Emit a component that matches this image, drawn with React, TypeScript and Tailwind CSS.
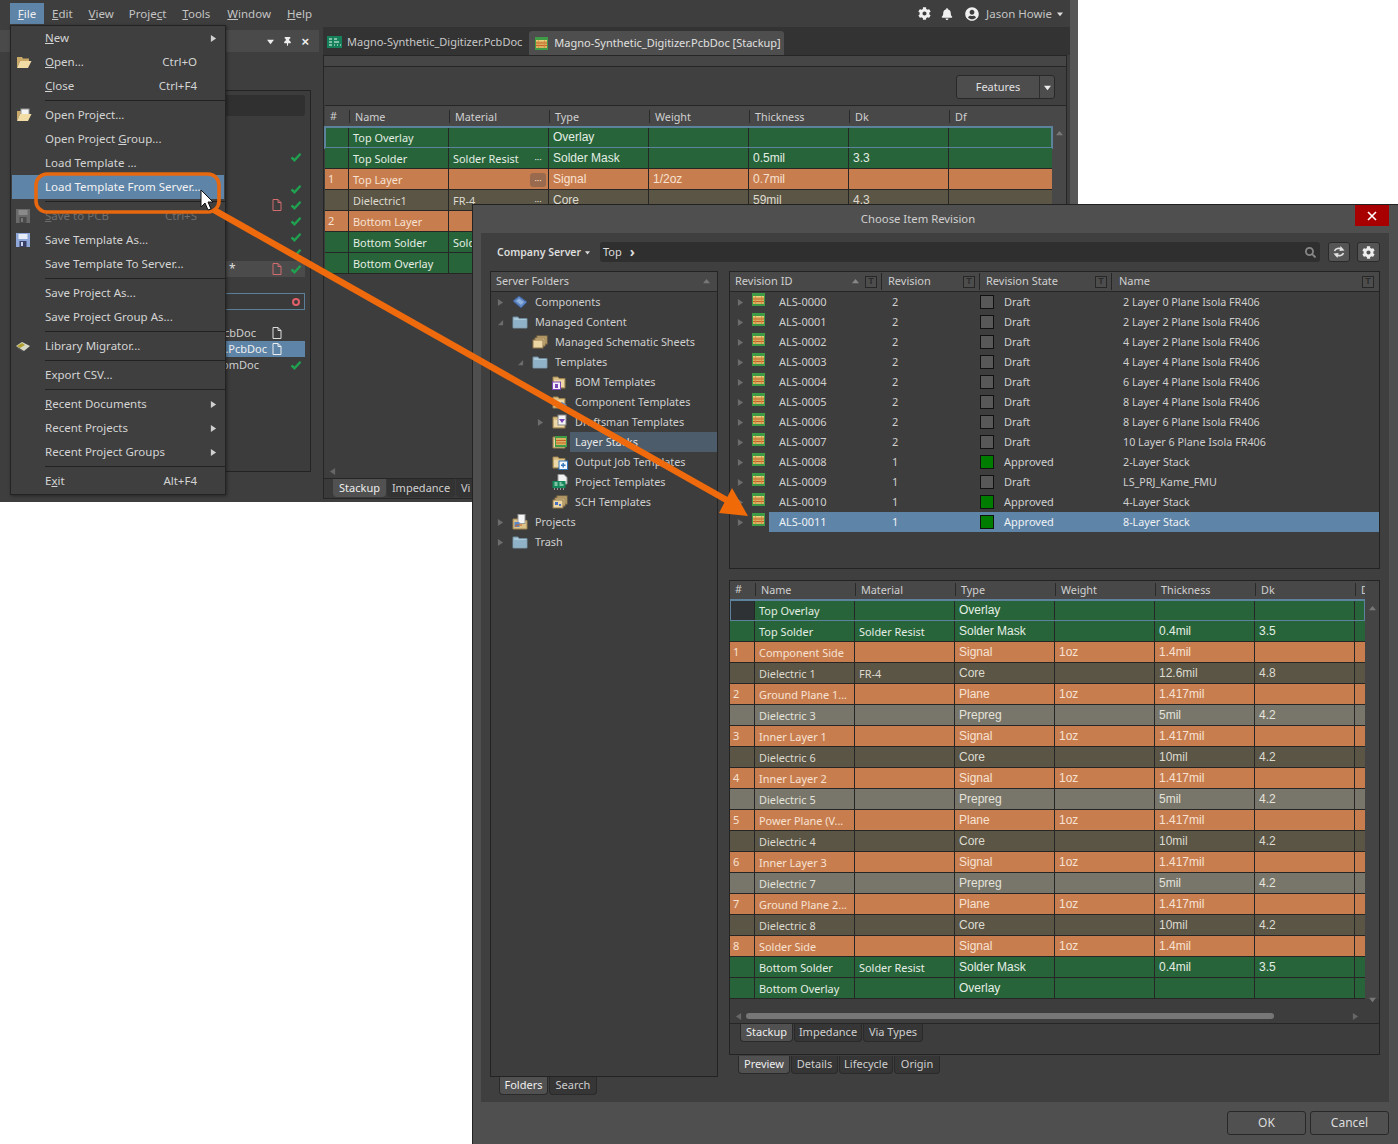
import { FaBell, FaCog, FaSearch, FaThumbtack, FaUserCircle } from "react-icons/fa";

const SANS = "font-['Noto_Sans',sans-serif]";
const ARIAL = "font-['Liberation_Sans',sans-serif]";

// ---------- small drawings ----------
const Tri = ({ dir = "right", color = "#6c6c6c", size = 7 }: { dir?: string; color?: string; size?: number }) => {
    const pts: Record<string, string> = {
        right: "1,0 7,4 1,8",
        down: "0,2 8,2 4,7",
        up: "0,6 8,6 4,1",
        left: "7,0 1,4 7,8",
        corner: "7,1 7,7 1,7",
    };
    return (
        <svg width={size} height={size} viewBox="0 0 8 8" className="shrink-0">
            <polygon points={pts[dir]} fill={color} />
        </svg>
    );
};

const LayerStackIcon = ({ size = 13 }: { size?: number }) => (
    <svg width={size} height={size} viewBox="0 0 13 13" className="shrink-0">
        <rect x="0" y="0" width="13" height="13" fill="#3f9a45" />
        <rect x="1" y="3" width="11" height="8" fill="#d9b060" />
        <rect x="1" y="3" width="11" height="1" fill="#e8d080" />
        <rect x="1" y="5.5" width="11" height="1" fill="#c8612a" />
        <rect x="1" y="8" width="11" height="1" fill="#c8612a" />
        <rect x="3" y="3" width="1" height="8" fill="#c98b3c" opacity="0.6" />
        <rect x="9" y="3" width="1" height="8" fill="#c98b3c" opacity="0.6" />
    </svg>
);

const BlueFolder = () => (
    <svg width="16" height="14" viewBox="0 0 16 14" className="shrink-0">
        <path d="M1 2h5l1 1.500h8V13H1z" fill="#a9c8da" stroke="#6f8c9f" />
        <rect x="2" y="5" width="12" height="7" fill="#8fb2c9" />
    </svg>
);

const TanFolder = ({ children }: { children?: React.ReactNode }) => (
    <svg width="16" height="16" viewBox="0 0 16 16" className="shrink-0">
        <path d="M1 3h5l1 1.500h6V14H1z" fill="#dcc187" stroke="#9c8350" />
        <rect x="2" y="6" width="10" height="7" fill="#ecd8a6" />
        {children}
    </svg>
);

const TreeIcon = ({ kind }: { kind: string }) => {
    if (kind === "blue") return <BlueFolder />;
    if (kind === "chip")
        return (
            <svg width="16" height="14" viewBox="0 0 16 14" className="shrink-0">
                <polygon points="1,6 7,1 15,7 9,13" fill="#5d86c2" stroke="#3b5c90" />
                <polygon points="4,6 7,3.5 12,7 9,10" fill="#8fb1de" />
            </svg>
        );
    if (kind === "stacks")
        return (
            <svg width="16" height="14" viewBox="0 0 16 14" className="shrink-0">
                <rect x="5" y="1" width="10" height="8" fill="#cdb27c" stroke="#8f774a" />
                <rect x="3" y="3" width="10" height="8" fill="#dcc38d" stroke="#8f774a" />
                <rect x="1" y="5" width="10" height="8" fill="#ecd6a3" stroke="#8f774a" />
            </svg>
        );
    if (kind === "bom")
        return (
            <TanFolder>
                <rect x="0.5" y="8" width="8" height="7.5" fill="#f2eefa" stroke="#7a45b5" />
                <rect x="3" y="10" width="3" height="4" fill="#7a45b5" />
            </TanFolder>
        );
    if (kind === "comp")
        return (
            <TanFolder>
                <polygon points="5,11 10,8 15,11 10,15" fill="#5d86c2" />
            </TanFolder>
        );
    if (kind === "draft")
        return (
            <TanFolder>
                <rect x="6" y="1" width="8" height="10" fill="#f4f4f4" stroke="#888" />
                <polygon points="7,5 13,5 10,9" fill="#7a45b5" />
            </TanFolder>
        );
    if (kind === "layer")
        return (
            <TanFolder>
                <rect x="3" y="2" width="12" height="11" fill="#3f9a45" />
                <rect x="4" y="4" width="10" height="7" fill="#d9b060" />
                <rect x="4" y="6" width="10" height="1" fill="#c8612a" />
                <rect x="4" y="8.5" width="10" height="1" fill="#c8612a" />
            </TanFolder>
        );
    if (kind === "output")
        return (
            <TanFolder>
                <rect x="7" y="7" width="8.5" height="8.5" fill="#f4f8fc" stroke="#2f74b8" />
                <path d="M9 11.2h4.500M11.200 9v4.500" stroke="#2f74b8" strokeWidth="1.400" />
            </TanFolder>
        );
    if (kind === "project")
        return (
            <svg width="16" height="16" viewBox="0 0 16 16" className="shrink-0">
                <path d="M6 0.500h6l3 3V10H6z" fill="#f2f2f2" stroke="#999" />
                <rect x="0.500" y="7" width="13" height="7" fill="#16895b" />
                <path d="M2.500 9h3M2.500 11h3M7.500 9h2M7.500 11h4M2 15h1M5 15h1M8 15h1M11 15h1" stroke="#eafff4" />
            </svg>
        );
    if (kind === "sch")
        return (
            <svg width="16" height="14" viewBox="0 0 16 14" className="shrink-0">
                <rect x="5" y="1" width="10" height="8" fill="#cdb27c" stroke="#8f774a" />
                <rect x="3" y="3" width="10" height="8" fill="#dcc38d" stroke="#8f774a" />
                <rect x="1" y="5" width="10" height="8" fill="#ecd6a3" stroke="#8f774a" />
                <rect x="3" y="7" width="3" height="3" fill="#4a6fc0" />
                <rect x="7" y="9" width="2" height="2" fill="#4a6fc0" />
            </svg>
        );
    return (
        <svg width="16" height="16" viewBox="0 0 16 16" className="shrink-0">
            <path d="M1 5h5l1 1.500h8V15H1z" fill="#dcc187" stroke="#9c8350" />
            <rect x="6" y="0.500" width="7" height="9" fill="#f4f4f4" stroke="#999" />
            <rect x="2.500" y="8" width="5" height="5" fill="#5d86c2" />
            <path d="M4 13v-2h6" stroke="#c8612a" fill="none" />
        </svg>
    );
};

const FilterT = () => (
    <span className="flex h-[12px] w-[12px] shrink-0 items-center justify-center border border-[#272727] bg-[#4d4d4d]">
        <span className={`${ARIAL} text-[9px] font-bold leading-none text-[#2b2b2b]`}>T</span>
    </span>
);

const Check = () => (
    <svg width="12" height="10" viewBox="0 0 12 10" className="shrink-0">
        <path d="M1.500 5.500 4.500 8.200 10.500 1.800" fill="none" stroke="#1fa14f" strokeWidth="2.400" />
    </svg>
);

const FileIcon = ({ color = "#d8d8d8" }: { color?: string }) => (
    <svg width="10" height="12" viewBox="0 0 10 12" className="shrink-0">
        <path d="M1 .500h5l3 3V11.500H1z" fill="none" stroke={color} />
        <path d="M6 .500v3h3" fill="none" stroke={color} />
    </svg>
);

const SwapIcon = () => (
    <svg width="14" height="14" viewBox="0 0 14 14">
        <path d="M2.500 6C3.500 3.500 7 2.500 10 4.200" fill="none" stroke="#e0e0e0" strokeWidth="1.600" />
        <polygon points="8.500,1 12.500,5.500 7.500,6" fill="#e0e0e0" />
        <path d="M11.500 8C10.500 10.500 7 11.500 4 9.800" fill="none" stroke="#e0e0e0" strokeWidth="1.600" />
        <polygon points="5.500,13 1.500,8.500 6.500,8" fill="#e0e0e0" />
    </svg>
);

// ---------- stackup tables ----------
type Layer = { n: string; name: string; mat: string; type: string; w: string; t: string; dk: string; k: string };

const rowBg: Record<string, string> = {
    g: "bg-[#27643a] text-[#e4eee4]",
    o: "bg-[#c87d4f] text-[#f7e2d2]",
    c: "bg-[#5a5545] text-[#dedbd0]",
    p: "bg-[#78766a] text-[#e4e3dc]",
};

// the last three rows run under the dialog, only what shows is kept
const backLayers: Layer[] = [
    { n: "", name: "Top Overlay", mat: "", type: "Overlay", w: "", t: "", dk: "", k: "g" },
    { n: "", name: "Top Solder", mat: "Solder Resist", type: "Solder Mask", w: "", t: "0.5mil", dk: "3.3", k: "g" },
    { n: "1", name: "Top Layer", mat: "", type: "Signal", w: "1/2oz", t: "0.7mil", dk: "", k: "o" },
    { n: "", name: "Dielectric1", mat: "FR-4", type: "Core", w: "", t: "59mil", dk: "4.3", k: "c" },
    { n: "2", name: "Bottom Layer", mat: "", type: "", w: "", t: "", dk: "", k: "o" },
    { n: "", name: "Bottom Solder", mat: "Solder", type: "", w: "", t: "", dk: "", k: "g" },
    { n: "", name: "Bottom Overlay", mat: "", type: "", w: "", t: "", dk: "", k: "g" },
];

const frontLayers: Layer[] = [
    { n: "", name: "Top Overlay", mat: "", type: "Overlay", w: "", t: "", dk: "", k: "g" },
    { n: "", name: "Top Solder", mat: "Solder Resist", type: "Solder Mask", w: "", t: "0.4mil", dk: "3.5", k: "g" },
    { n: "1", name: "Component Side", mat: "", type: "Signal", w: "1oz", t: "1.4mil", dk: "", k: "o" },
    { n: "", name: "Dielectric 1", mat: "FR-4", type: "Core", w: "", t: "12.6mil", dk: "4.8", k: "c" },
    { n: "2", name: "Ground Plane 1...", mat: "", type: "Plane", w: "1oz", t: "1.417mil", dk: "", k: "o" },
    { n: "", name: "Dielectric 3", mat: "", type: "Prepreg", w: "", t: "5mil", dk: "4.2", k: "p" },
    { n: "3", name: "Inner Layer 1", mat: "", type: "Signal", w: "1oz", t: "1.417mil", dk: "", k: "o" },
    { n: "", name: "Dielectric 6", mat: "", type: "Core", w: "", t: "10mil", dk: "4.2", k: "c" },
    { n: "4", name: "Inner Layer 2", mat: "", type: "Signal", w: "1oz", t: "1.417mil", dk: "", k: "o" },
    { n: "", name: "Dielectric 5", mat: "", type: "Prepreg", w: "", t: "5mil", dk: "4.2", k: "p" },
    { n: "5", name: "Power Plane (V...", mat: "", type: "Plane", w: "1oz", t: "1.417mil", dk: "", k: "o" },
    { n: "", name: "Dielectric 4", mat: "", type: "Core", w: "", t: "10mil", dk: "4.2", k: "c" },
    { n: "6", name: "Inner Layer 3", mat: "", type: "Signal", w: "1oz", t: "1.417mil", dk: "", k: "o" },
    { n: "", name: "Dielectric 7", mat: "", type: "Prepreg", w: "", t: "5mil", dk: "4.2", k: "p" },
    { n: "7", name: "Ground Plane 2...", mat: "", type: "Plane", w: "1oz", t: "1.417mil", dk: "", k: "o" },
    { n: "", name: "Dielectric 8", mat: "", type: "Core", w: "", t: "10mil", dk: "4.2", k: "c" },
    { n: "8", name: "Solder Side", mat: "", type: "Signal", w: "1oz", t: "1.4mil", dk: "", k: "o" },
    { n: "", name: "Bottom Solder", mat: "Solder Resist", type: "Solder Mask", w: "", t: "0.4mil", dk: "3.5", k: "g" },
    { n: "", name: "Bottom Overlay", mat: "", type: "Overlay", w: "", t: "", dk: "", k: "g" },
];

const TableHeader = ({ hashW, lastLabel, size }: { hashW: string; lastLabel: string; size: string }) => (
    <div className={`flex ${size} items-center bg-[#484848] text-[10.800px] text-[#d0d0d0]`}>
        <span className={`${hashW} shrink-0 pl-[5px]`}>#</span>
        {["Name", "Material", "Type", "Weight", "Thickness", "Dk"].map((h) => (
            <span key={h} className="w-[100px] shrink-0 border-l border-[#2a2a2a] pl-[5px] leading-[13px]">{h}</span>
        ))}
        <span className="min-w-0 flex-1 overflow-hidden whitespace-nowrap border-l border-[#2a2a2a] pl-[5px] leading-[13px]">{lastLabel}</span>
    </div>
);

const Cell = ({ children, arial }: { children?: React.ReactNode; arial?: boolean }) => (
    <span className={`flex h-full w-[100px] shrink-0 items-center whitespace-nowrap border-r border-[#262626] pl-[4px] ${arial ? `${ARIAL} text-[12px]` : "pt-[2px] text-[10.900px]"}`}>
        {children}
    </span>
);

const LayerRow = ({ l, hashW, focus, darkHash, dots }: { l: Layer; hashW: string; focus?: boolean; darkHash?: boolean; dots?: boolean }) => (
    <div className={`relative flex h-[21px] items-center border-b border-[#262626] ${rowBg[l.k]} ${focus ? "outline-2 -outline-offset-1 outline-[#5c829c]" : ""}`}>
        <span className={`flex h-full ${hashW} shrink-0 items-center border-r border-[#262626] pl-[3px] text-[11px] ${darkHash ? "bg-[#2e3235]" : ""}`}>{l.n}</span>
        <Cell>{l.name}</Cell>
        <Cell>
            {l.mat}
            {dots && l.k !== "g" || (dots && l.mat) ? (
                <span className={`absolute left-[205px] flex h-[14px] w-[16px] items-center justify-center rounded-[3px] text-[9px] leading-none ${l.k === "o" ? "bg-[#9a6a4e]" : ""}`}>···</span>
            ) : null}
        </Cell>
        <Cell arial>{l.type}</Cell>
        <Cell arial>{l.w}</Cell>
        <Cell arial>{l.t}</Cell>
        <Cell arial>{l.dk}</Cell>
        <span className="h-full flex-1" />
    </div>
);

// ---------- file menu ----------
const menu: (null | { t: React.ReactNode; s?: string; sub?: boolean; ico?: string; hi?: boolean; off?: boolean })[] = [
    { t: <><u>N</u>ew</>, sub: true },
    { t: <><u>O</u>pen...</>, s: "Ctrl+O", ico: "open" },
    { t: <><u>C</u>lose</>, s: "Ctrl+F4" },
    null,
    { t: "Open Project...", ico: "proj" },
    { t: <>Open Project <u>G</u>roup...</> },
    { t: "Load Template ..." },
    { t: "Load Template From Server...", hi: true },
    null,
    { t: <><u>S</u>ave to PCB</>, s: "Ctrl+S", ico: "saveoff", off: true },
    { t: "Save Template As...", ico: "save" },
    { t: "Save Template To Server..." },
    null,
    { t: "Save Project As..." },
    { t: "Save Project Group As..." },
    null,
    { t: "Library Migrator...", ico: "lib" },
    null,
    { t: "Export CSV..." },
    null,
    { t: <><u>R</u>ecent Documents</>, sub: true },
    { t: "Recent Projects", sub: true },
    { t: "Recent Project Groups", sub: true },
    null,
    { t: <>E<u>x</u>it</>, s: "Alt+F4" },
];

const MenuIcon = ({ kind }: { kind?: string }) => {
    if (kind === "open")
        return (
            <svg width="16" height="14" viewBox="0 0 16 14">
                <path d="M1 2h5l1 1.500h6V6H4L1 13z" fill="#c9a868" />
                <path d="M4 6h11.500L12 13H1z" fill="#f2dca6" />
            </svg>
        );
    if (kind === "proj")
        return (
            <svg width="16" height="14" viewBox="0 0 16 14">
                <path d="M1 3h4v3H4L1 13z" fill="#c9a868" />
                <rect x="5" y="1" width="8" height="7" fill="#f2f2f2" stroke="#999" />
                <path d="M4 6h11.500L12 13H1z" fill="#f2dca6" />
            </svg>
        );
    if (kind === "save" || kind === "saveoff")
        return (
            <svg width="14" height="14" viewBox="0 0 14 14">
                <rect width="14" height="14" fill={kind === "save" ? "#8ea6d8" : "#6a6a6a"} />
                <rect x="2.500" y="1" width="9" height="5" fill={kind === "save" ? "#e8eef8" : "#8a8a8a"} />
                <rect x="3.500" y="8" width="7" height="6" fill={kind === "save" ? "#3a3f66" : "#4a4a4a"} />
                <rect x="5" y="9" width="2" height="4" fill={kind === "save" ? "#c8d4ee" : "#777"} />
            </svg>
        );
    if (kind === "lib")
        return (
            <svg width="14" height="11" viewBox="0 0 14 11">
                <polygon points="0,5 6,1 14,5 8,10" fill="#d8d8c8" />
                <polygon points="1,5 6,2 9,4 4,7" fill="#b0a030" />
                <path d="M1 6.500 7 10.500" stroke="#555" />
            </svg>
        );
    return null;
};

const FileMenu = () => (
    <div className="absolute left-[10px] top-[25px] z-20 w-[216px] border border-[#232323] bg-[#3f3f3f] pb-[1px] text-[11.500px] text-[#d4d4d4] shadow-[1px_1px_3px_#0006]">
        {menu.map((m, i) =>
            m === null ? (
                <div key={i} className="flex h-[5px] items-center pl-[34px]">
                    <div className="h-[1px] w-full bg-[#222]" />
                </div>
            ) : (
                <div key={i} className={`flex h-[24px] items-center ${m.hi ? "mx-[1px] bg-[#5e84a8] text-[#f2f2f2]" : ""} ${m.off ? "text-[#6e6e6e]" : ""}`}>
                    <span className={`flex ${m.hi ? "w-[33px]" : "w-[34px]"} shrink-0 justify-start pl-[5px]`}>
                        <MenuIcon kind={m.ico} />
                    </span>
                    <span className="flex-1 whitespace-nowrap">{m.t}</span>
                    {m.s && <span className="pr-[28px]">{m.s}</span>}
                    {m.sub && <span className="pr-[8px]"><Tri size={7} color="#d0d0d0" /></span>}
                </div>
            ),
        )}
    </div>
);

// ---------- background window ----------
const TopBar = () => (
    <div className="flex h-[27px] items-center bg-[#3e3e3e] pl-[10px] pr-[7px] text-[11.500px] text-[#c4c4c4]">
        <span className="flex h-[21px] w-[34px] items-center justify-center bg-[#5e84a8] text-[#eee]"><span><u>F</u>ile</span></span>
        <span className="ml-[8px]"><u>E</u>dit</span>
        <span className="ml-[16px]"><u>V</u>iew</span>
        <span className="ml-[15px]">Proje<u>c</u>t</span>
        <span className="ml-[16px]"><u>T</u>ools</span>
        <span className="ml-[17px]"><u>W</u>indow</span>
        <span className="ml-[16px]"><u>H</u>elp</span>
        <span className="flex-1" />
        <FaCog className="text-[13px] text-[#f0f0f0]" />
        <FaBell className="ml-[10px] text-[12px] text-[#f0f0f0]" />
        <FaUserCircle className="ml-[12px] text-[14px] text-[#f0f0f0]" />
        <span className="ml-[7px]">Jason Howie</span>
        <span className="ml-[5px]"><Tri dir="down" color="#ddd" size={6} /></span>
    </div>
);

const BackRow = ({ label, gap, file, check, sel }: { label?: string; gap?: string; file?: string; check?: boolean; sel?: boolean }) => (
    <div className={`flex h-[16px] items-center justify-end pr-[2px] text-[#cfcfcf] ${sel ? "bg-[#5e84a8] text-[#eee]" : ""}`}>
        {label && <span className={`${gap}`}>{label}</span>}
        <span className="flex w-[14px] justify-center">{file && <FileIcon color={file} />}</span>
        <span className="ml-[5px] flex w-[14px] justify-center">{check && <Check />}</span>
    </div>
);

const BackLeftPanel = () => (
    <div className="flex w-[323px] shrink-0 flex-col bg-[#3e3e3e] text-[11px]">
        <div className="mr-[4px] mt-[3px] flex h-[22px] items-center justify-end bg-[#4a4a4a] pr-[10px] text-[#eee]">
            <Tri dir="down" color="#eee" />
            <FaThumbtack className="ml-[9px] text-[9px]" />
            <span className={`${ARIAL} ml-[9px] text-[13px] font-bold leading-none`}>×</span>
        </div>
        <div className="ml-[10px] mr-[12px] mt-[38px] flex h-[382px] flex-col border border-[#232323] bg-[#3c3c3c]">
            <div className="mx-[5px] mt-[4px] h-[21px] rounded-[3px] bg-[#303030]" />
            <div className="mt-[33px] flex flex-col px-[5px]">
                <BackRow check />
                <BackRow />
                <BackRow check />
                <BackRow file="#d26c70" check />
                <BackRow check />
                <BackRow check />
                <BackRow check />
                <div className="flex h-[16px] items-center bg-[#4b4b4b] pr-[2px] text-[#ddd]">
                    <span className="ml-[213px] flex-1 text-[12px]">*</span>
                    <span className="flex w-[14px] justify-center"><FileIcon color="#d26c70" /></span>
                    <span className="ml-[5px] flex w-[14px] justify-center"><Check /></span>
                </div>
            </div>
            <div className="mx-[5px] mt-[16px] flex h-[17px] items-center justify-end border border-[#5c7f99] bg-[#3a3a3a] pr-[4px]">
                <span className="h-[8px] w-[8px] rounded-full border-2 border-[#e0606a]" />
            </div>
            <div className="mt-[15px] flex flex-col px-[5px]">
                <BackRow label="cbDoc" gap="mr-[14px]" file="#ddd" />
                <BackRow label=".PcbDoc" gap="mr-[3px]" file="#eee" sel />
                <BackRow label="omDoc" gap="mr-[11px]" check />
            </div>
        </div>
    </div>
);

const BackDoc = () => (
    <div className="flex min-w-0 flex-1 flex-col">
        <div className="flex h-[28px] items-end bg-[#333] text-[11px] text-[#c8c8c8]">
            <span className="mb-[5px] ml-[4px] flex items-center gap-[5px]">
                <svg width="15" height="12" viewBox="0 0 15 12" className="shrink-0">
                    <rect width="15" height="12" fill="#15805a" />
                    <path d="M2 3h3M2 6h3M2 9h3M7 3h3M7 6h5M7 9h1M10 9h1M13 9h1" stroke="#eafff4" />
                </svg>
                Magno-Synthetic_Digitizer.PcbDoc
            </span>
            <span className="ml-[7px] flex h-[24px] w-[255px] items-center gap-[6px] rounded-t-[3px] bg-[#4e4e4e] pl-[6px] text-[#e0e0e0]">
                <LayerStackIcon />
                <span className="whitespace-nowrap">Magno-Synthetic_Digitizer.PcbDoc [Stackup]</span>
            </span>
        </div>
        <div className="flex h-[444px] w-[744px] flex-col border-x border-t border-b border-[#262626] bg-[#3d3d3d]">
            <div className="h-[11px] border-b border-[#262626] bg-[#464646]" />
            <div className="flex h-[38px] items-center justify-end bg-[#404040] pr-[11px] pt-[2px]">
                <div className="flex h-[24px] w-[99px] items-center rounded-[3px] border border-[#282828] bg-[#4d4d4d] text-[11px] text-[#e0e0e0]">
                    <span className="flex-1 text-center">Features</span>
                    <span className="flex h-full w-[15px] items-center justify-center border-l border-[#2d2d2d]"><Tri dir="down" color="#eee" /></span>
                </div>
            </div>
            <div className="flex min-h-0 flex-1">
                <div className="flex w-[728px] flex-col pl-[1px]">
                    <div className="border-y border-[#262626]"><TableHeader hashW="w-[24px]" lastLabel="Df" size="h-[20px]" /></div>
                    {backLayers.map((l, i) => (
                        <LayerRow key={i} l={l} hashW="w-[24px]" focus={i === 0} dots={i < 4} />
                    ))}
                </div>
                <div className="flex flex-1 justify-center border-t border-[#262626] bg-[#484848] pt-[24px]">
                    <Tri dir="up" color="#777" />
                </div>
            </div>
            <div className="flex h-[24px] items-center pl-[5px] pt-[10px]"><Tri dir="left" color="#666" /></div>
            <div className="flex h-[20px] items-start border-t border-[#262626] bg-[#3a3a3a] pl-[9px] text-[11px] text-[#d0d0d0]">
                <span className="flex h-[18px] w-[53px] items-center justify-center rounded-b-[4px] bg-[#515151] text-[#eee]">Stackup</span>
                <span className="ml-[1px] flex h-[18px] w-[68px] items-center justify-center rounded-b-[4px] bg-[#333]">Impedance</span>
                <span className="ml-[1px] flex h-[18px] flex-1 items-center rounded-bl-[4px] bg-[#333] pl-[5px]">Vi</span>
            </div>
        </div>
    </div>
);

const BackWindow = () => (
    <div className="absolute left-0 top-0 flex h-[502px] w-[1078px] flex-col border-r-[8px] border-[#575757] bg-[#3e3e3e]">
        <TopBar />
        <div className="flex min-h-0 flex-1">
            <BackLeftPanel />
            <BackDoc />
        </div>
    </div>
);

// ---------- dialog ----------
const folders = [
    { t: "Components", ico: "chip", lv: 0, a: "right" },
    { t: "Managed Content", ico: "blue", lv: 0, a: "corner" },
    { t: "Managed Schematic Sheets", ico: "stacks", lv: 1, a: "" },
    { t: "Templates", ico: "blue", lv: 1, a: "corner" },
    { t: "BOM Templates", ico: "bom", lv: 2, a: "" },
    { t: "Component Templates", ico: "comp", lv: 2, a: "" },
    { t: "Draftsman Templates", ico: "draft", lv: 2, a: "right" },
    { t: "Layer Stacks", ico: "layer", lv: 2, a: "", sel: true },
    { t: "Output Job Templates", ico: "output", lv: 2, a: "" },
    { t: "Project Templates", ico: "project", lv: 2, a: "" },
    { t: "SCH Templates", ico: "sch", lv: 2, a: "" },
    { t: "Projects", ico: "projects", lv: 0, a: "right" },
    { t: "Trash", ico: "blue", lv: 0, a: "right" },
];

const indent = ["pl-[6px]", "pl-[26px]", "pl-[46px]"];

const BottomTabs = ({ labels, widths, cls }: { labels: string[]; widths: string[]; cls: string }) => (
    <div className={`flex h-[18px] ${cls} gap-[1px] text-[11px]`}>
        {labels.map((l, i) => (
            <span key={l} className={`flex h-[18px] ${widths[i]} items-center justify-center rounded-b-[4px] border border-t-0 border-[#2a2a2a] ${i === 0 ? "bg-[#515151] text-[#eee]" : "bg-[#363636] text-[#cfcfcf]"}`}>{l}</span>
        ))}
    </div>
);

const FoldersPanel = () => (
    <div className="flex w-[228px] shrink-0 flex-col">
        <div className="flex h-[806px] flex-col border border-[#232323] bg-[#3d3d3d] text-[10.850px] text-[#cfcfcf]">
            <div className="flex h-[20px] shrink-0 items-center justify-between border-b border-[#262626] bg-[#484848] pl-[5px] pr-[7px]">
                <span>Server Folders</span>
                <Tri dir="up" color="#777" />
            </div>
            {folders.map((f) => (
                <div key={f.t} className={`flex h-[20px] items-center ${indent[f.lv]} first:mt-[1px]`}>
                    <span className="flex w-[15px] shrink-0 items-center">{f.a && <Tri dir={f.a} />}</span>
                    <span className="flex w-[16px] shrink-0 justify-center"><TreeIcon kind={f.ico} /></span>
                    <span className={`ml-[2px] flex h-full flex-1 items-center whitespace-nowrap pl-[5px] ${f.sel ? "bg-[#4c5c6a] text-[#e8e8e8]" : ""}`}>{f.t}</span>
                </div>
            ))}
        </div>
        <BottomTabs labels={["Folders", "Search"]} widths={["w-[49px]", "w-[48px]"]} cls="ml-[9px]" />
    </div>
);

const names = ["2 Layer 0 Plane Isola FR406", "2 Layer 2 Plane Isola FR406", "4 Layer 2 Plane Isola FR406", "4 Layer 4 Plane Isola FR406", "6 Layer 4 Plane Isola FR406", "8 Layer 4 Plane Isola FR406", "8 Layer 6 Plane Isola FR406", "10 Layer 6 Plane Isola FR406", "2-Layer Stack", "LS_PRJ_Kame_FMU", "4-Layer Stack", "8-Layer Stack"];

const RevisionRow = ({ i }: { i: number }) => {
    const rev = i < 8 ? "2" : "1";
    const ok = i === 8 || i === 10 || i === 11;
    const sel = i === 11;
    return (
        <div className="flex h-[20px] items-center first:mt-[1px]">
            <span className="flex w-[39px] shrink-0 items-center pl-[7px]">
                <Tri />
                <span className="ml-[8px] -mt-[5px]"><LayerStackIcon /></span>
            </span>
            <div className={`flex h-full min-w-0 flex-1 items-center ${sel ? "bg-[#5e84a8] text-[#eef2f6]" : ""}`}>
                <span className="w-[114px] shrink-0 pl-[10px]">ALS-{String(i).padStart(4, "0")}</span>
                <span className="w-[97px] shrink-0 pl-[9px]">{rev}</span>
                <span className={`h-[14px] w-[14px] shrink-0 border border-[#111] ${ok ? "bg-[#007c00]" : "bg-[#585858]"}`} />
                <span className="w-[129px] shrink-0 pl-[10px]">{ok ? "Approved" : "Draft"}</span>
                <span className="whitespace-nowrap text-[10.750px]">{names[i]}</span>
            </div>
        </div>
    );
};

const RevisionPanel = () => (
    <div className="flex h-[298px] flex-col border border-[#232323] bg-[#3d3d3d] text-[11px] text-[#cfcfcf]">
        <div className="flex h-[20px] shrink-0 items-center border-b border-[#262626] bg-[#484848]">
            <span className="flex w-[152px] shrink-0 items-center border-r border-[#262626] pl-[5px] pr-[4px]">
                <span className="flex-1">Revision ID</span>
                <span className="mr-[6px]"><Tri dir="up" color="#888" size={7} /></span>
                <FilterT />
            </span>
            <span className="flex w-[98px] shrink-0 items-center border-r border-[#262626] pl-[6px] pr-[4px]">
                <span className="flex-1">Revision</span>
                <FilterT />
            </span>
            <span className="flex w-[132px] shrink-0 items-center border-r border-[#262626] pl-[6px] pr-[4px]">
                <span className="flex-1">Revision State</span>
                <FilterT />
            </span>
            <span className="flex flex-1 items-center pl-[7px] pr-[5px]">
                <span className="flex-1">Name</span>
                <FilterT />
            </span>
        </div>
        {names.map((_, i) => <RevisionRow key={i} i={i} />)}
    </div>
);

const PreviewPanel = () => (
    <div className="flex h-[475px] flex-col border border-[#232323] bg-[#3d3d3d]">
        <div className="flex">
            <div className="flex w-[635px] shrink-0 flex-col overflow-hidden">
                <TableHeader hashW="w-[25px]" lastLabel="Df" size="h-[19px] pb-[3px]" />
                {frontLayers.map((l, i) => (
                    <LayerRow key={i} l={l} hashW="w-[25px]" focus={i === 0} darkHash={i === 0} />
                ))}
            </div>
            <div className="flex flex-1 flex-col items-center justify-between bg-[#444] pt-[24px]">
                <Tri dir="up" color="#777" />
                <span className="translate-y-[4px]"><Tri dir="down" color="#777" /></span>
            </div>
        </div>
        <div className="flex h-[25px] items-center border-b border-[#262626] pl-[5px] pr-[20px] pt-[10px]">
            <Tri dir="left" color="#666" />
            <div className="ml-[4px] h-[6px] w-[528px] rounded-full bg-[#777]" />
            <span className="flex-1" />
            <Tri dir="right" color="#666" />
        </div>
        <BottomTabs labels={["Stackup", "Impedance", "Via Types"]} widths={["w-[53px]", "w-[68px]", "w-[60px]"]} cls="ml-[10px]" />
    </div>
);

const Dialog = () => (
    <div className="absolute left-[472px] top-[204px] flex h-[940px] w-[926px] flex-col border-l border-t border-[#222] bg-[#4f4f4f] text-[#cfcfcf]">
        <div className="flex h-[28px] shrink-0 items-start">
            <span className="flex h-[28px] flex-1 items-center justify-center pl-[8px] text-[11.300px] text-[#cfcfcf]">Choose Item Revision</span>
            <span className="mr-[9px] flex h-[21px] w-[34px] items-center justify-center bg-[#a80000] text-white">
                <svg width="10" height="10" viewBox="0 0 10 10"><path d="M1 1 9 9M9 1 1 9" stroke="#fff" strokeWidth="1.600" /></svg>
            </span>
        </div>
        <div className="ml-[8px] mr-[9px] flex h-[869px] flex-col bg-[#3f3f3f] pl-[9px] pr-[9px] pt-[9px]">
            <div className="flex h-[20px] items-center text-[11px]">
                <span className="flex w-[110px] shrink-0 items-center gap-[4px] whitespace-nowrap pl-[7px] pt-[1px] text-[10.500px] font-semibold text-[#ddd]">
                    Company Server
                    <Tri dir="down" color="#ddd" size={5} />
                </span>
                <div className="flex h-[20px] flex-1 items-center rounded-[3px] bg-[#2f2f2f] pl-[3px] pr-[4px] text-[#ddd]">
                    <span className="pt-[1px]">Top</span>
                    <span className="ml-[8px] text-[14px] font-bold leading-none">›</span>
                    <span className="flex-1" />
                    <FaSearch className="text-[11px] text-[#888]" />
                </div>
                <span className="ml-[8px] flex h-[20px] w-[22px] items-center justify-center rounded-[3px] border border-[#2a2a2a] bg-[#555]"><SwapIcon /></span>
                <span className="ml-[7px] flex h-[20px] w-[23px] items-center justify-center rounded-[3px] border border-[#2a2a2a] bg-[#555] text-[#eee]"><FaCog className="text-[13px]" /></span>
            </div>
            <div className="mt-[9px] flex min-h-0 flex-1">
                <FoldersPanel />
                <div className="ml-[11px] flex min-w-0 flex-1 flex-col">
                    <RevisionPanel />
                    <div className="h-[11px]" />
                    <PreviewPanel />
                    <div className="h-[1px]" />
                    <BottomTabs labels={["Preview", "Details", "Lifecycle", "Origin"]} widths={["w-[52px]", "w-[47px]", "w-[54px]", "w-[46px]"]} cls="ml-[9px]" />
                </div>
            </div>
        </div>
        <div className="flex flex-1 items-center justify-end gap-[4px] pr-[9px] text-[12px] text-[#ddd]">
            <span className="flex h-[24px] w-[79px] items-center justify-center rounded-[3px] border border-[#282828] bg-[#505050]">OK</span>
            <span className="flex h-[24px] w-[79px] items-center justify-center rounded-[3px] border border-[#282828] bg-[#505050]">Cancel</span>
        </div>
    </div>
);

// annotation drawn over both windows
const Annotation = () => (
    <svg className="pointer-events-none absolute left-0 top-0 z-30" width="1398" height="1144" viewBox="0 0 1398 1144">
        <rect x="36" y="174" width="183" height="38" rx="11" fill="none" stroke="#e8680f" strokeWidth="3.600" />
        <path d="M214 210 730 502" stroke="#ee6a0c" strokeWidth="6.500" />
        <polygon points="748,516 732,488 719,513" fill="#f06a08" />
        <path d="M201 190v17l4-4 3 7 3-1-3-7h5z" fill="#fff" stroke="#111" strokeWidth="1" />
    </svg>
);

export default function App() {
    return (
        <div className={`relative h-[1144px] w-[1398px] overflow-hidden bg-white ${SANS}`}>
            <BackWindow />
            <Dialog />
            <FileMenu />
            <Annotation />
        </div>
    );
}
